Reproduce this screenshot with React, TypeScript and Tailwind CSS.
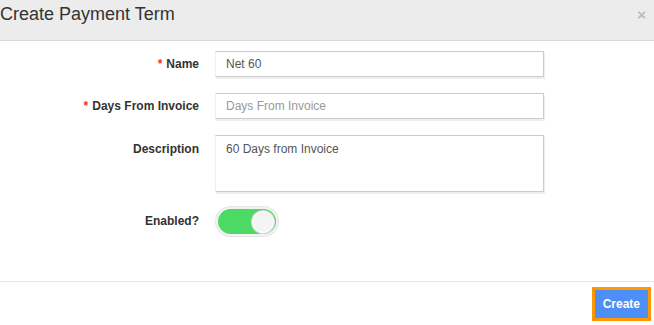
import { useState } from "react";

const Label = ({ text, required, className = "" }: { text: string; required?: boolean; className?: string }) => (
    <label className={`w-[199px] shrink-0 text-right text-[12px] font-bold text-[#333] ${className}`}>
        {required && <span className="text-[#e33] mr-1">*</span>}
        {text}
    </label>
);

const inputCls =
    "w-[329px] shrink-0 border border-[#ccc] border-l-[#f0f0f0] shadow-[1px_2px_0_#eee] bg-white px-[10px] text-[12px] text-[#555] placeholder:text-[#999] outline-none";

const App = () => {
    const [enabled, setEnabled] = useState(true);

    return (
        <div className="w-[654px] h-[325px] bg-white flex flex-col font-['Liberation_Sans',Arial,sans-serif]">
            <div className="h-[41px] shrink-0 bg-[#ececec] border-b border-[#d9d9d9] flex items-start justify-between">
                <h1 className="text-[18px] leading-[18px] pt-[5px] text-[#333]">Create Payment Term</h1>
                <button className="text-[#bbb] text-[15px] font-bold leading-none pt-[7px] pr-[8px]">×</button>
            </div>

            <div className="flex-1 flex flex-col gap-4 pt-[10px]">
                <div className="flex items-center gap-4">
                    <Label text="Name" required />
                    <input className={`${inputCls} h-[26px]`} defaultValue="Net 60" />
                </div>
                <div className="flex items-center gap-4">
                    <Label text="Days From Invoice" required />
                    <input className={`${inputCls} h-[26px]`} placeholder="Days From Invoice" />
                </div>
                <div className="flex items-start gap-4">
                    <Label text="Description" className="pt-[5px]" />
                    <textarea
                        className={`${inputCls} h-[57px] py-[6px] resize-none leading-[14px]`}
                        defaultValue="60 Days from Invoice"
                    />
                </div>
                <div className="flex items-center gap-4 -mt-[1px]">
                    <Label text="Enabled?" className="-mt-[1px]" />
                    <button
                        onClick={() => setEnabled(!enabled)}
                        className="ml-[1px] w-[62px] h-[29px] rounded-full bg-[#f2f2f2] shadow-[0_0_0_1px_#e6e6e6] flex items-center px-[2px]"
                    >
                        <span className={`w-full h-[25px] rounded-full flex items-center px-[2px] ${enabled ? "bg-[#4cd964] justify-end" : "bg-[#ddd] justify-start"}`}>
                            <span className="w-[22px] h-[22px] rounded-full bg-[#f4f4f4] border border-white shadow-[0_0_0_1px_#ddd]" />
                        </span>
                    </button>
                </div>
            </div>

            <div className="h-[44px] shrink-0 border-t border-[#e5e5e5] flex items-center justify-end pr-[3px]">
                <button className="h-[34px] px-[8px] bg-[#4d8ef7] border-[3px] border-[#ff9800] text-white text-[12px] font-bold">
                    Create
                </button>
            </div>
        </div>
    );
};

export default App;
